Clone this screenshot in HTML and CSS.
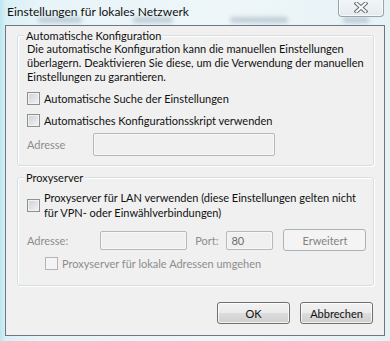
FILE: index.html
```html
<!DOCTYPE html>
<html lang="de">
<head>
    <meta charset="UTF-8">
    <meta name="viewport" content="width=device-width, initial-scale=1.0">
    <title>Einstellungen für lokales Netzwerk</title>
    <link rel="stylesheet" href="styles.css">
</head>
<body>
    <div class="window">
        <div class="ghost">
            <span class="g1"></span>
            <span class="g2"></span>
            <span class="g3"></span>
            <span class="g4"></span>
        </div>
        <div class="titlebar">
            <div class="title">Einstellungen für lokales Netzwerk</div>
            <div class="closeBtn">
                <svg width="14" height="11" viewBox="0 0 14 11">
                    <path d="M2.5 1.5 L11.5 9.5 M11.5 1.5 L2.5 9.5" stroke="#6b6f73" stroke-width="4" stroke-linecap="square"/>
                    <path d="M2.5 1.5 L11.5 9.5 M11.5 1.5 L2.5 9.5" stroke="#fafafa" stroke-width="2" stroke-linecap="square"/>
                </svg>
            </div>
        </div>

        <div class="client">
            <div class="group autoGroup">
                <div class="legend">Automatische Konfiguration</div>
                <p class="desc">Die automatische Konfiguration kann die manuellen Einstellungen<br>überlagern. Deaktivieren Sie diese, um die Verwendung der manuellen<br>Einstellungen zu garantieren.</p>
                <label class="check cb1"><span class="box"></span>Automatische Suche der Einstellungen</label>
                <label class="check cb2"><span class="box"></span>Automatisches Konfigurationsskript verwenden</label>
                <div class="row scriptRow">
                    <span class="lbl off">Adresse</span>
                    <span class="field scriptField"></span>
                </div>
            </div>

            <div class="group proxyGroup">
                <div class="legend">Proxyserver</div>
                <label class="check cb3"><span class="box"></span><span>Proxyserver für LAN verwenden (diese Einstellungen gelten nicht<br>für VPN- oder Einwählverbindungen)</span></label>
                <div class="row proxyRow">
                    <span class="lbl off">Adresse:</span>
                    <span class="field addrField"></span>
                    <span class="lbl off portLbl">Port:</span>
                    <span class="field portField">80</span>
                    <button class="btn disabledBtn">Erweitert</button>
                </div>
                <label class="check cb4 off"><span class="box"></span>Proxyserver für lokale Adressen umgehen</label>
            </div>

            <div class="actions">
                <button class="btn">OK</button>
                <button class="btn">Abbrechen</button>
            </div>
        </div>
    </div>
</body>
</html>
```

FILE: styles.css
```css
*{
    box-sizing: border-box;
}
body{
    margin: 0;
    font-family: "Segoe UI", Lato, "Noto Sans", sans-serif;
    font-size: 11px;
    color: #101010;
}
.window{
    width: 390px;
    height: 341px;
    position: relative;
    overflow: hidden;
    background: linear-gradient(90deg, #bde6f0 0, #d9f0f6 6px, #e8f4f8 40px, #eef6f9 60%, #e6f2f6 100%);
}
.ghost{
    position: absolute;
    left: 0;
    top: 17px;
    width: 390px;
    filter: blur(2px);
}
.ghost span{
    position: absolute;
    height: 6px;
    border-radius: 3px;
    background: rgba(90, 115, 140, 0.3);
}
.g1{ left: 38px; width: 44px; }
.g2{ left: 133px; width: 40px; }
.g3{ left: 230px; width: 58px; }
.g4{ left: 343px; width: 26px; }

.titlebar{
    position: relative;
    height: 25px;
    display: flex;
    justify-content: space-between;
    align-items: flex-start;
}
.title{
    padding: 4px 0 0 7px;
    font-size: 12px;
    line-height: 16px;
    white-space: nowrap;
}
.closeBtn{
    width: 46px;
    height: 18px;
    margin: -1px 6px 0 0;
    border: 1px solid #9aa3aa;
    border-top: none;
    border-radius: 0 0 4px 4px;
    background: linear-gradient(#f3f6f8, #e4ebef);
    box-shadow: inset 0 0 0 1px rgba(255,255,255,0.7);
    display: flex;
    align-items: center;
    justify-content: center;
}

.client{
    position: relative;
    margin-left: 5px;
    width: 380px;
    height: 311px;
    background: #f0f0f0;
    border: 1px solid #6f7780;
    padding: 0 0 0 11px;
}
.group{
    width: 357px;
    border: 1px solid #d5dfe5;
    border-radius: 3px;
    box-shadow: inset 1px 1px 0 #fff, 1px 1px 0 #fff;
    padding-left: 9px;
    white-space: nowrap;
}
.legend{
    display: table;
    margin: -8px 0 0 -3px;
    padding: 0 2px;
    line-height: 15px;
    background: #f0f0f0;
}
.autoGroup{
    margin-top: 9px;
    height: 131px;
}
.autoGroup .legend{
    margin-top: -7px;
    line-height: 13px;
}
.proxyGroup{
    margin-top: 11px;
    height: 109px;
}
.proxyGroup .legend{
    margin-bottom: 5px;
}
.desc{
    margin: 0;
    line-height: 14px;
}

.check{
    display: flex;
    align-items: center;
    line-height: 15px;
}
.box{
    width: 13px;
    height: 13px;
    margin: 0 4px 0 0;
    border: 1px solid #8e8f8f;
    background: linear-gradient(135deg, #cdd0d4, #f4f4f4);
    box-shadow: inset 0 0 0 1px #f2f2f2;
    flex: none;
}
.cb1{ margin-top: 7px; }
.cb2{ margin-top: 7px; }
.cb4{
    margin: 5px 0 0 18px;
}
.off{
    color: #8d8d8d;
}
.off .box{
    border-color: #b5b5b5;
    background: #f4f4f4;
    box-shadow: none;
}

.row{
    display: flex;
    align-items: center;
}
.lbl{
    line-height: 15px;
}
.field{
    display: block;
    border: 1px solid #b8b8b8;
    border-radius: 2px;
    background: #f0f0f0;
    box-shadow: inset 0 0 0 1px #f7f7f7;
}
.scriptRow{
    margin-top: 5px;
}
.scriptField{
    width: 182px;
    height: 23px;
    margin-left: 28px;
}
.proxyRow{
    margin-top: 9px;
    height: 22px;
}
.addrField{
    width: 87px;
    height: 19px;
    margin-left: 32px;
}
.portLbl{
    margin-left: 8px;
}
.portField{
    width: 47px;
    height: 19px;
    margin-left: 8px;
    padding: 1px 0 0 4px;
    line-height: 15px;
    color: #6d6d6d;
}

.btn{
    font: inherit;
    color: #101010;
    height: 22px;
    padding: 0;
    border: 1px solid #707070;
    border-radius: 3px;
    background: linear-gradient(#f2f2f2 0, #ebebeb 50%, #dddddd 50%, #cfcfcf 100%);
    box-shadow: inset 0 0 0 1px rgba(255,255,255,0.75);
}
.disabledBtn{
    width: 83px;
    margin-left: 10px;
    color: #838383;
    border-color: #adb2b5;
    background: #f4f4f4;
    box-shadow: none;
}
.actions{
    display: flex;
    justify-content: flex-end;
    gap: 10px;
    width: 357px;
    margin-top: 16px;
    padding-right: 1px;
}
.actions .btn{
    width: 73px;
}
```
